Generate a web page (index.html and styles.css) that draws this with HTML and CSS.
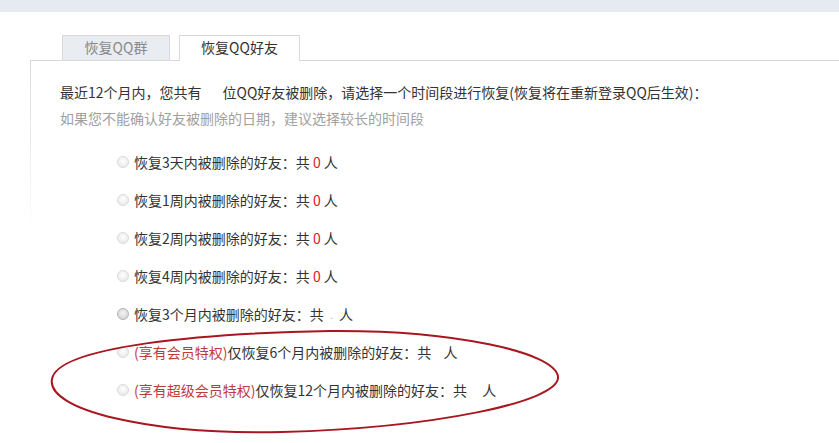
FILE: index.html
```html
<!DOCTYPE html>
<html lang="zh-CN">
<head>
<meta charset="utf-8">
<title>恢复QQ好友</title>
<link rel="stylesheet" href="styles.css">
</head>
<body>
<div class="topbar"></div>
<div class="tabs">
  <div class="tab">恢复QQ群</div>
  <div class="tab active">恢复QQ好友</div>
</div>
<div class="panel">
  <p class="intro">最近12个月内，您共有<span class="blank"></span>位QQ好友被删除，请选择一个时间段进行恢复(恢复将在重新登录QQ后生效)：</p>
  <p class="hint">如果您不能确认好友被删除的日期，建议选择较长的时间段</p>
  <ul class="options">
    <li class="option"><span class="radio"></span>恢复3天内被删除的好友：共 <span class="num">0</span> 人</li>
    <li class="option"><span class="radio"></span>恢复1周内被删除的好友：共 <span class="num">0</span> 人</li>
    <li class="option"><span class="radio"></span>恢复2周内被删除的好友：共 <span class="num">0</span> 人</li>
    <li class="option"><span class="radio"></span>恢复4周内被删除的好友：共 <span class="num">0</span> 人</li>
    <li class="option"><span class="radio dark"></span>恢复3个月内被删除的好友：共 <span class="num empty dot">.</span> 人</li>
    <li class="option"><span class="radio"></span><span class="vip">(享有会员特权)</span>仅恢复6个月内被删除的好友：共 <span class="num empty narrow"></span> 人</li>
    <li class="option"><span class="radio"></span><span class="vip">(享有超级会员特权)</span>仅恢复12个月内被删除的好友：共 <span class="num empty"></span> 人</li>
  </ul>
</div>
<svg class="mark" width="839" height="443" viewBox="0 0 839 443">
  <path d="M52,379 C58,346 205,333 330,331 C452,330 556,352 558,377 C560,402 432,428 282,432 C150,435 46,410 52,379 Z" fill="none" stroke="#a8161f" stroke-width="2"/>
</svg>
</body>
</html>
```

FILE: styles.css
```css
html, body {
  margin: 0;
  padding: 0;
  background: #ffffff;
}
body {
  position: relative;
  width: 839px;
  height: 443px;
  overflow: hidden;
  font-family: "Noto Sans CJK SC", "Microsoft YaHei", sans-serif;
  font-size: 14px;
  color: #333333;
}
.topbar {
  height: 12px;
  background: #e6ebf1;
}
.tabs {
  display: flex;
  align-items: flex-end;
  gap: 9px;
  margin-top: 23px;
  padding-left: 62px;
  height: 25px;
}
.tab {
  box-sizing: border-box;
  width: 108px;
  height: 25px;
  line-height: 23px;
  text-align: center;
  background: #e9ecf0;
  border: 1px solid #d6dae0;
  border-bottom: none;
  color: #8a8a8a;
  font-size: 14px;
}
.tab.active {
  width: 121px;
  height: 26px;
  margin-bottom: -1px;
  background: #ffffff;
  border-color: #d9d9d9;
  color: #333333;
  position: relative;
}
.panel {
  margin-left: 30px;
  border-top: 1px solid #d9d9d9;
  padding: 18px 0 0 30px;
  background: linear-gradient(to bottom, #d9d9d9 0, rgba(217,217,217,0) 175px) left top / 1px 100% no-repeat;
  height: 364px;
}
.intro, .hint {
  margin: 0;
  line-height: 26px;
  white-space: nowrap;
}
.hint {
  color: #a0a0a0;
}
.blank {
  display: inline-block;
  width: 21px;
}
.options {
  list-style: none;
  margin: 12px 0 0 57px;
  padding: 0;
}
.option {
  display: flex;
  align-items: center;
  height: 38px;
  white-space: pre;
}
.radio {
  box-sizing: border-box;
  width: 12px;
  height: 12px;
  margin-right: 5px;
  border-radius: 50%;
  border: 1px solid #dadada;
  background: radial-gradient(circle at 50% 40%, #ffffff 0, #f1f1f1 50%, #e4e4e4 100%);
  flex: none;
}
.radio.dark {
  border-color: #b4b4b4;
  background: radial-gradient(circle at 50% 40%, #f4f4f4 0, #dcdcdc 60%, #c8c8c8 100%);
}
.num {
  color: #e0191e;
}
.num.empty {
  display: inline-block;
  width: 9px;
}
.num.narrow {
  width: 6px;
}
.num.dot {
  color: #b8b8b8;
  font-size: 10px;
  text-align: center;
}
.vip {
  color: #c0393c;
}
.mark {
  position: absolute;
  left: 0;
  top: 0;
  pointer-events: none;
}
```
